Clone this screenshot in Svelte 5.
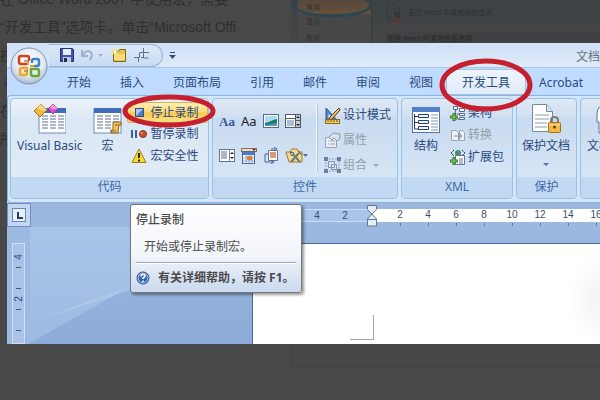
<script>
  const tabs = ['开始', '插入', '页面布局', '引用', '邮件', '审阅', '视图', '开发工具', 'Acrobat'];
  const active = '开发工具';
  const margin = ['8', '6', '4', '2'];
  const marks = ['2', '4', '6', '8', '10', '12', '14', '16'];
  const controls = ['rich', 'plain', 'picture', 'combo', 'list', 'date', 'block', 'legacy'];
  const controlNames = ['格式文本', '纯文本', '图片', '组合框', '下拉列表', '日期选取器', '构建基块', '旧式工具'];
  const article = [
    '在 Office Word 2007 中使用宏，需要',
    '“开发工具”选项卡。单击“Microsoft Offi',
    '按',
    '\u00a0在',
    '在',
    '所'
  ];
</script>

{#snippet sheet()}
  <rect x="1" y="7" width="27" height="24" fill="#fff" stroke="#6f8cbd" />
  <rect x="1" y="6" width="27" height="5" fill="#3f6dbb" />
  <path d="M4 14h6m2 0h6m2 0h6M4 17h6m2 0h6m2 0h6M4 20h6m2 0h6m2 0h6M4 23h6m2 0h6m2 0h6M4 26h6m2 0h6m2 0h6" stroke="#5b6f9c" />
{/snippet}

{#snippet icon(name)}
  {#if name === 'rich'}
    <svg width="18" height="16"><text x="0" y="13" font-size="13" font-weight="bold" font-family="Liberation Serif, serif" fill="#34599c">Aa</text></svg>
  {:else if name === 'plain'}
    <svg width="18" height="16"><text x="0" y="13" font-size="13" font-family="Noto Sans, sans-serif" fill="#222">Aa</text></svg>
  {:else if name === 'picture'}
    <svg width="16" height="16"><rect x=".5" y="1.5" width="15" height="13" fill="#fff" stroke="#5a6b7e" /><rect x="2" y="3" width="12" height="10" fill="#a9ddee" /><path d="M2 10l4-1 4-2 4-1v7H2z" fill="#1f7868" /><path d="M2 12l12-2v3H2z" fill="#4f98c4" /></svg>
  {:else if name === 'combo'}
    <svg width="16" height="16"><rect x=".5" y="1.5" width="15" height="4" fill="#fff" stroke="#4d5a6c" /><rect x=".5" y="5.5" width="10" height="9" fill="#fff" stroke="#4d5a6c" /><path d="M2 8h7M2 10h7M2 12h7" stroke="#5c7cae" /><rect x="10.5" y="1.5" width="5" height="13" fill="#c6cdd5" stroke="#4d5a6c" /><path d="M11 5h4l-2-2zM11 11h4l-2 2z" fill="#222" /><path d="M11 7.5h4" stroke="#4d5a6c" /></svg>
  {:else if name === 'list'}
    <svg width="16" height="16"><rect x=".5" y="2.5" width="15" height="12" fill="#fff" stroke="#64748a" /><path d="M2 5h6M2 7h6M2 9h6M2 11h6" stroke="#5c6f8e" /><path d="M10.5 3v11" stroke="#7b8ba0" /><path d="M11 7h4l-2-2zM11 10h4l-2 2z" fill="#222" /></svg>
  {:else if name === 'date'}
    <svg width="17" height="17"><rect x=".5" y="1.5" width="15" height="3" fill="#f4dfc2" stroke="#8d6a50" /><rect x="1.5" y="4.5" width="12" height="12" fill="#fff" stroke="#4568a3" /><rect x="2" y="5" width="11" height="3" fill="#4c79bf" /><path d="M2 11h11M2 14h11M5 8v8M8 8v8M11 8v8" stroke="#8aa6d2" /><rect x="6" y="9" width="5" height="4" fill="#e57b2d" /><path d="M11 2h4l-2 2z" fill="#6b2f1f" /></svg>
  {:else if name === 'block'}
    <svg width="16" height="17"><path d="M5.5 3.5h9v10h-9z" fill="#fff" stroke="#61779d" /><path d="M7 6h6M7 8h6M7 10h6" stroke="#d57a45" stroke-width="1.5" /><path d="M5 7H2v8h8M12 2H8M11 0l3 2-3 2M8 13l3 2-3 2" fill="none" stroke="#4d6387" /></svg>
  {:else if name === 'legacy'}
    <svg width="23" height="17"><path d="M1 5h4l2-3h5l2 3h3v10H4z" fill="#f4d987" stroke="#a27c2e" /><path d="M6 5l9 10M14 6l-8 9" stroke="#6c7888" stroke-width="2" /><path d="M5 5l4 1-2 3zM13 4l4 4" fill="#eef2f8" stroke="#4d5b70" /><path d="M18 7h5l-2.500 3z" fill="#4e6c98" /></svg>
  {:else if name === 'design'}
    <svg width="17" height="17"><path d="M2 1v12h11z" fill="#5685d1" stroke="#2a529a" /><path d="M4.500 7v4H9z" fill="#e1edfb" /><path d="M15 1l1 2-8 9-3 1 1-3z" fill="#f0c65a" stroke="#4c3b25" /><rect x="1.5" y="12.5" width="14" height="4" fill="#f7cd56" stroke="#8d671d" /><path d="M4 13v2M7 13v2M10 13v2M13 13v2" stroke="#6d4c12" /></svg>
  {:else if name === 'props'}
    <svg width="17" height="16"><path d="M1.500 5.500h11v10h-11zM4 9h1M4 12h1M6 9h5M6 12h5" fill="#e9eef5" stroke="#97a3b4" /><path d="M5 5l4-4 7 1v5l-3 2-3-3-2 2z" fill="#d8dfe9" stroke="#8b98ab" /></svg>
  {:else if name === 'group'}
    <svg width="17" height="16"><path d="M2 2h13v12H2z" fill="none" stroke="#8a9cb8" stroke-dasharray="2 1" /><path d="M4.500 4.500h6v6h-6zM7.500 7.500h5v5h-5z" fill="#dce5f1" stroke="#8194b2" /><path d="M0 0h4v4H0zM13 0h4v4h-4zM0 12h4v4H0zM13 12h4v4h-4z" fill="#6a80a3" /></svg>
  {:else if name === 'stop'}
    <svg width="16" height="16"><rect x="4.5" y="3.500" width="8" height="8" fill="#4f7fc6" stroke="#2c4f8e" /><path d="M5 4h7L5 11z" fill="#a9c7ee" /></svg>
  {:else if name === 'pause'}
    <svg width="16" height="16"><path d="M1 4v8M5 4v8" stroke="#3b5d9a" stroke-width="2" /><circle cx="12" cy="8" r="3.500" fill="#c7502c" stroke="#94321b" /><circle cx="11" cy="7" r="1" fill="#f0a285" /></svg>
  {:else if name === 'warn'}
    <svg width="16" height="16"><path d="M8 1l7 13.500H1z" fill="#f8dc28" stroke="#98801e" stroke-linejoin="round" /><path d="M8 5v5M8 11.500v2" stroke="#222" stroke-width="2" /></svg>
  {:else if name === 'schema'}
    <svg width="16" height="16"><path d="M3.500 1.500h4v3h-4zM9.500 3.500h5v3h-5zM9.500 8.500h5v2h-5zM9.500 12.500h5v2h-5zM5.500 5v9h4M6 9h4" fill="#fff" stroke="#536b91" /><path d="M4 8v8M0 12h8" stroke="#397e28" stroke-width="3" /><path d="M4 9v6M1 12h6" stroke="#87d35c" /></svg>
  {:else if name === 'convert'}
    <svg width="16" height="16"><path d="M1.500 3.500h5l2 2v8h-7zM9.500 3.500h3l2 2v8h-5z" fill="#edf1f6" stroke="#9aa6b6" /><path d="M4 9h7M9 6l3 3-3 3" fill="none" stroke="#8794a8" /></svg>
  {:else if name === 'pack'}
    <svg width="16" height="17"><path d="M5.500 6.500h9v9h-9z" fill="#fff" stroke="#64789b" /><path d="M9 10h4M9 12h4M9 14h4" stroke="#6d7d97" /><path d="M4 1L1 4l3 3M12 1l3 3-3 3" fill="none" stroke="#222" stroke-dasharray="2 1" /><circle cx="8" cy="4" r="3" fill="#4c8c79" /><path d="M4 8v8M0 12h8" stroke="#397e28" stroke-width="3" /><path d="M4 9v6M1 12h6" stroke="#87d35c" /></svg>
  {:else if name === 'vb'}
    <svg width="32" height="32"><g transform="translate(4)">{@render sheet()}</g><path d="M7 2l6 6-7 7-6-6z" fill="#f0b83d" stroke="#a96f16" /><path d="M7 2l6 6-5 1-5-3z" fill="#f8d77e" /><path d="M19 2l5 5-5 5-5-5z" fill="#d957c8" stroke="#9a2e91" /><path d="M19 2l5 5h-6l-2-2z" fill="#f09ee4" /></svg>
  {:else if name === 'macro'}
    <svg width="30" height="32">{@render sheet()}<path d="M20 20h8v3h-2l-1 8h-7v-3h2z" fill="#f2c25a" stroke="#8d651f" /><path d="M22 23h4M17 29h6" stroke="#8d651f" /></svg>
  {:else if name === 'struct'}
    <svg width="30" height="32"><rect x="1.5" y="5.5" width="27" height="25" fill="#fff" stroke="#55749f" /><rect x="1" y="5" width="28" height="5" fill="#4e80cb" /><path d="M20 13h7M20 16h7M20 19h7M20 22h7M20 25h7M20 28h7" stroke="#8295b5" /><path d="M3.500 12v15h4M3.500 14.500h4M3.500 20.500h4" fill="none" stroke="#273f6e" /><path d="M7.500 12.500h10v3h-10zM7.500 18.500h10v3h-10zM7.500 24.500h10v3h-10z" fill="#edf4fb" stroke="#273f6e" /></svg>
  {:else if name === 'protect'}
    <svg width="32" height="32"><path d="M2.500 2.500h14l6 7v20h-20z" fill="#fff" stroke="#7188ab" /><path d="M16.500 2.500v7h6" fill="#d5e2f3" stroke="#7188ab" /><path d="M5 13h14M5 17h14M5 21h12M5 25h12" stroke="#8c9bb1" /><path d="M21 22v-4q0-3 3.500-3t3.500 3v4" fill="none" stroke="#807a70" stroke-width="2" /><rect x="18.5" y="20.5" width="12" height="10" rx="1" fill="#f2b944" stroke="#a96e18" /><path d="M19 23h11" stroke="#fae09a" /><circle cx="24.5" cy="25" r="1.5" fill="#65420c" /></svg>
  {:else if name === 'template'}
    <svg width="32" height="32"><circle cx="18" cy="7" r="5" fill="#f6f8fc" stroke="#5d7196" /><path d="M10 31V15q0-5 8-5t8 5v16z" fill="#d9e5f6" stroke="#5d7196" /><path d="M2 12q0-9 10-10l-3 8v6H7v15H4V20H2z" fill="#fff" stroke="#5d7196" /></svg>
  {/if}
{/snippet}

{#snippet small(name, label, off = false, hot = false, drop = false)}
  <button class="small" class:off class:hot>
    {@render icon(name)}<span>{label}</span>
    {#if drop}<i class="arrow"></i>{/if}
  </button>
{/snippet}

{#snippet large(name, label)}
  <button class="large">{@render icon(name)}<span>{label}</span></button>
{/snippet}

<div class="page">
  <div class="behind" aria-hidden="true">
    <div class="article">
      {#each article as line}<p>{line}</p>{/each}
    </div>
    <div class="options">
      <div class="side">
        <span class="picked">常用</span><span>显示</span><span>校对</span>
        <svg class="ring" width="84" height="26"><ellipse cx="42" cy="12" rx="39" ry="11" fill="none" stroke="#2b464f" stroke-width="3" /></svg>
      </div>
      <div class="pane">
        <div class="lead">
          <svg width="20" height="20"><path d="M2.500 1.500h9l3 3v13h-12zM5 6h2M5 10h2M5 14h2M9 6h3" fill="none" stroke="#383838" /><circle cx="12" cy="12" r="3" fill="#383838" /><path d="M7 19q5-7 10 0z" fill="#59382f" /></svg>
          更改 Word 中最常用的选项。
        </div>
        <div class="band">使用 Word 时采用的首选项</div>
      </div>
    </div>
  </div>

  <main class="viewer">
    <header class="title">
      <div class="quick">
        <button aria-label="保存"><svg width="14" height="14"><path d="M.5.500h12l1 1v12H.5z" fill="#4054b4" stroke="#292f76" /><path d="M3 1h8v6H3z" fill="#e9f0fb" /><path d="M3 9h8v5H3z" fill="#c1cae0" /><path d="M4 10h3v4H4z" fill="#252c5c" /></svg></button>
        <button aria-label="撤消"><svg width="22" height="14"><path d="M1 2v6h6M2 7q2-4 6-4 5 2 1 9" fill="none" stroke="#9eb0cb" stroke-width="2" /><path d="M17 6h5l-2.500 3z" fill="#a2b0c6" /></svg></button>
        <button aria-label="新建"><svg width="17" height="16"><path d="M3.500 4.500h5l1-2h6v12h-12z" fill="#efc347" stroke="#836322" /><path d="M4 7h11v6H4z" fill="#f8dc77" /><path d="M5 0v9M0 5h9M2 2l6 6M8 2L2 8" stroke="#f6e05a" /><circle cx="5" cy="5" r="1.5" fill="#fff" /></svg></button>
        <button aria-label="裁剪"><svg width="16" height="16"><path d="M0 10.500h5.500V5.500H15M4.500 15v-4M9.500 1v10h5M7 10.500h3" fill="none" stroke="#5b7295" /></svg></button>
      </div>
      <button class="more" aria-label="自定义快速访问工具栏"><svg width="7" height="8"><path d="M1 1.500h5" stroke="#31507f" /><path d="M0 4h7L3.500 8z" fill="#31507f" /></svg></button>
      <span class="name">文档</span>
    </header>

    <button class="office" aria-label="Office 按钮">
      <svg width="38" height="38" viewBox="0 0 38 38">
        <defs><radialGradient id="orb" cx=".5" cy=".35" r=".65"><stop offset="0" stop-color="#fff" /><stop offset=".65" stop-color="#e3e9f2" /><stop offset="1" stop-color="#a9b8cf" /></radialGradient></defs>
        <circle cx="19" cy="19" r="18" fill="url(#orb)" stroke="#7e93b3" />
        <g fill="none" stroke-width="2.5">
          <path d="M17 17h-6q-2 0-2-2v-4q0-2 2-2h6q2 0 2 2v3" stroke="#cf4020" />
          <path d="M22 16v-2q0-2 2-2h3q2 0 2 2v3q0 2-2 2h-3" stroke="#3d82c9" />
          <path d="M17 21v5q0 2-2 2h-3q-2 0-2-2v-3q0-2 2-2z" stroke="#eda829" />
          <path d="M21 22v5q0 2 2 2h4q2 0 2-2v-3q0-2-2-2z" stroke="#67a936" />
          <path d="M14 14h4v4M20 19h5M14 24h4" stroke="#df7a28" stroke-width="1.5" />
        </g>
      </svg>
    </button>

    <nav class="tabs">
      {#each tabs as tab}<button class="tab" class:active={tab === active}>{tab}</button>{/each}
    </nav>

    <div class="ribbon">
      <section class="group code">
        <div class="body">
          {@render large('vb', 'Visual Basic')}
          {@render large('macro', '宏')}
          <div class="stack">
            {@render small('stop', '停止录制', false, true)}
            {@render small('pause', '暂停录制')}
            {@render small('warn', '宏安全性')}
          </div>
        </div>
        <h2>代码</h2>
      </section>
      <section class="group ctl">
        <div class="body">
          <div class="grid">
            {#each controls as c, i}<button aria-label={controlNames[i]}>{@render icon(c)}</button>{/each}
          </div>
          <div class="stack wide">
            {@render small('design', '设计模式')}
            {@render small('props', '属性', true)}
            {@render small('group', '组合', true, false, true)}
          </div>
        </div>
        <h2>控件</h2>
      </section>
      <section class="group xml">
        <div class="body">
          {@render large('struct', '结构')}
          <div class="stack">
            {@render small('schema', '架构')}
            {@render small('convert', '转换', true)}
            {@render small('pack', '扩展包')}
          </div>
        </div>
        <h2>XML</h2>
      </section>
      <section class="group protect">
        <div class="body">
          <button class="large">{@render icon('protect')}<span>保护文档</span><i class="arrow"></i></button>
        </div>
        <h2>保护</h2>
      </section>
      <section class="group last">
        <div class="body">{@render large('template', '文档模板')}</div>
        <h2>模板</h2>
      </section>
    </div>

    <div class="rulerbar">
      <button class="stop" aria-label="制表符"><svg width="14" height="14"><rect x=".5" y=".5" width="13" height="13" fill="#e8f0fb" stroke="#6b88b8" /><path d="M6 4v6h5" fill="none" stroke="#2c3c5c" stroke-width="2" /></svg></button>
      <div class="ruler">
        <div class="out">{#each margin as m}<span>{m}</span>{/each}</div>
        <div class="in">{#each marks as m}<span>{m}</span>{/each}</div>
        <svg class="indent" width="10" height="22"><path d="M.5.500h9v4L5 9 .500 4.500zM5 9l4.500 5v7h-9v-7z" fill="#e5eef5" stroke="#64798c" /><path d="M1 14.500h8" stroke="#64798c" /></svg>
      </div>
    </div>

    <div class="work">
      <div class="vruler"><div><span>4</span><b></b><span></span><b></b><span>2</span><b></b><span></span><b></b></div></div>
      <svg class="shine" width="222" height="117"><path d="M0 0h222L110 60 0 96z" fill="#bcd5f2" opacity=".4" /><path d="M0 116L170 20 130 48 0 96z" fill="#c9ddf5" opacity=".3" /></svg>
      <div class="paper"><i></i></div>
    </div>

    <div class="tip" role="tooltip">
      <strong>停止录制</strong>
      <p>开始或停止录制宏。</p>
      <div class="help">
        <svg width="14" height="14"><circle cx="7" cy="7" r="6" fill="#3564b7" stroke="#1f3e7d" /><circle cx="7" cy="7" r="5" fill="none" stroke="#c4d7f2" /><path d="M5 5.500q0-2 2-2t2 1.500q0 1-2 2v1M7 9.500v1.500" fill="none" stroke="#fff" stroke-width="1.5" /></svg>
        有关详细帮助，请按 F1。
      </div>
    </div>

    <svg class="notes" width="593" height="100" fill="none" stroke="#c6202e" stroke-width="5">
      <ellipse cx="162" cy="68" rx="44" ry="14" />
      <ellipse cx="479" cy="42" rx="44" ry="24" />
    </svg>
  </main>
</div>

<style>
  :global(body) { background: #484848; }
  .page, .page * { box-sizing: border-box; }
  .page {
    position: relative;
    min-height: 100vh;
    overflow: hidden;
    background: #484848;
    font: 12px/16px "Noto Sans", "Noto Sans CJK SC", sans-serif;
    color: #2b4a7d;
  }
  svg { display: block; flex: none; }
  p, h2 { margin: 0; font-size: inherit; font-weight: normal; }
  button { margin: 0; padding: 0; border: 0; background: none; font: inherit; color: inherit; white-space: nowrap; }

  .behind { display: flex; height: 368px; }
  .article {
    flex: none;
    width: 290px;
    margin-top: -15px;
    font: 14px/28px "Liberation Sans", "Noto Sans CJK SC", sans-serif;
    color: #2f2f2f;
    white-space: nowrap;
  }
  .article p { height: 28px; }
  .options {
    flex: 1;
    display: flex;
    padding-left: 4px;
    border: solid #434546;
    border-width: 0 0 3px 4px;
    font-size: 7px;
    color: #2f2f2f;
    background: linear-gradient(#3d4245, #444546 40px, #474747 80px);
  }
  .side { position: relative; flex: none; width: 74px; height: 80px; border-right: 1px solid #3a3a3a; background: #474747; }
  .side span { display: block; height: 16px; padding-left: 8px; }
  .side .picked { height: 14px; background: linear-gradient(#57483c, #66503b); }
  .ring { position: absolute; left: -8px; top: -7px; }
  .pane { flex: 1; padding-left: 13px; }
  .lead { display: flex; align-items: center; gap: 3px; height: 26px; }
  .band { margin-top: 5px; padding-left: 2px; background: #3f4143; font-weight: bold; }

  .viewer { position: absolute; left: 7px; right: 0; top: 43px; overflow: hidden; background: #bfdbff; }
  .title {
    display: flex;
    align-items: center;
    height: 25px;
    padding-left: 42px;
    border-bottom: 1px solid #a5c8e6;
    background: linear-gradient(#cfe0f8, #d3e3f7 8px, #e0ebf9);
    white-space: nowrap;
  }
  .quick {
    flex: none;
    display: flex;
    align-items: center;
    gap: 7px;
    width: 114px;
    height: 23px;
    padding-left: 11px;
    border: 1px solid #9bb4d9;
    border-left: 0;
    border-radius: 0 12px 12px 0;
    background: linear-gradient(#dce8f8, #c8dbf3);
  }
  .more { margin-left: 6px; }
  .name { margin-left: auto; line-height: 24px; padding-top: 3px; color: #68717f; }
  .office { position: absolute; left: 3px; top: 4px; }

  .tabs { display: flex; gap: 1px; height: 27px; padding: 1px 0 0 46px; overflow: hidden; }
  .tab { padding: 0 14px; border-radius: 4px 4px 0 0; line-height: 28px; }
  .tab.active { flex: 0 0 80px; margin: 0 -2px; background: linear-gradient(#eef5fe, #dfebf9); box-shadow: inset 0 0 0 1px #a4c4e6; }

  .ribbon {
    display: flex;
    gap: 3px;
    height: 108px;
    padding: 2px 0 3px 2px;
    border: solid #8db2df;
    border-width: 1px 0 1px 1px;
    border-radius: 4px 0 0 4px;
    background: #d3e7fa;
    overflow: hidden;
  }
  .group {
    flex: none;
    display: flex;
    flex-direction: column;
    border: 1px solid #9dbfe2;
    border-radius: 4px;
    overflow: hidden;
    background: linear-gradient(#dfe9f6, #d0dff1 18px, #c9dbf0 20px, #dbe9f8);
  }
  .group h2 { flex: none; height: 21px; line-height: 20px; text-align: center; background: #c1d9f3; color: #4268a5; }
  .body { flex: 1; display: flex; align-items: flex-start; padding-top: 3px; }
  .code { width: 199px; background: linear-gradient(#ecf2fa, #dfe9f5 18px, #dce7f4 20px, #e2edf9); }
  .ctl { width: 186px; }
  .xml { width: 112px; }
  .protect { width: 61px; }
  .last { width: 100px; }

  .large { display: flex; flex-direction: column; align-items: center; gap: 4px; padding: 0 6px; }
  .code .large + .large { padding: 0 4px; }
  .xml .large { padding: 0 7px 0 9px; }
  .protect .large { padding: 0 5px; }
  .arrow { border: solid transparent; border-width: 3px 3px 0; border-top-color: #55719c; }
  .large .arrow { margin-top: 5px; }
  .small .arrow { margin-left: 4px; }
  .stack { display: flex; flex-direction: column; }
  .code .stack { flex: 1; }
  .code .small { gap: 4px; padding-left: 4px; }
  .small { display: flex; align-items: center; gap: 2px; height: 22px; padding: 0 2px; border-radius: 3px; }
  .small.off { color: #939eac; }
  .small.off .arrow { border-top-color: #9da8b6; }
  .small.hot { height: 21px; background: linear-gradient(#fdf0bb, #fbd976 10px, #f8c94d 11px, #fce38d); box-shadow: inset 0 0 0 1px #d9b65c; }
  .stack.wide { gap: 3px; padding: 2px 0 0 5px; }
  .grid {
    display: grid;
    grid-template-columns: repeat(4, 22px);
    grid-auto-rows: 34px;
    width: 104px;
    margin-top: 2px;
    padding-left: 5px;
    border-right: 1px solid #f1f7fd;
    box-shadow: 1px 0 #b1c8e2;
  }
  .grid button { display: flex; align-items: center; padding-left: 1px; overflow: visible; }

  .rulerbar { display: flex; height: 24px; background: #9cb8df; }
  .stop { display: flex; align-items: center; justify-content: center; flex: none; width: 24px; height: 24px; background: #c3d6f2; border: 1px solid #6f8fc6; }
  .ruler { position: relative; flex: 1; display: flex; height: 13px; margin: 6px 0 0 216px; font: 10px/12px "Liberation Sans", sans-serif; color: #3d4d68; }
  .ruler span { flex: none; width: 28px; text-align: center; }
  .out { display: flex; flex: none; border: solid #c9dcf3; border-width: 1px 0; background: #a9c4e8; padding-right: 14px; }
  .in { display: flex; flex: 1; width: 0; padding-left: 13px; background: #fff; }
  .in span::after { content: ""; display: block; width: 1px; height: 3px; margin: 2px auto 0; background: #5d7cab; }
  .indent { position: absolute; left: 120px; top: -4px; }

  .work { display: flex; height: 117px; background: linear-gradient(#9bb8e1, #8cabd8); }
  .vruler { flex: none; width: 23px; padding: 16px 0 0 5px; background: #9dbae2; }
  .vruler div {
    display: flex;
    flex-direction: column;
    align-items: center;
    width: 13px;
    height: 101px;
    padding-top: 7px;
    border: 1px solid #cfe0f4;
    background: #a9c2e6;
    font: 10px/12px "Liberation Sans", sans-serif;
  }
  .vruler span { flex: none; height: 12px; transform: rotate(-90deg); }
  .vruler b { flex: none; width: 5px; height: 1px; margin: 4px 0; background: #42567a; }
  .shine { flex: none; }
  .paper {
    flex: 1;
    margin-top: 16px;
    border: solid #4f688f;
    border-width: 1px 0 0 1px;
    background: radial-gradient(ellipse 32px 45px at 100% 55px, #f3f3f3, #fff);
  }
  .paper i { display: block; width: 24px; height: 25px; margin: 71px 0 0 97px; border: solid #a6a6a6; border-width: 0 1px 1px 0; }

  .tip {
    position: absolute;
    left: 123px;
    top: 161px;
    width: 172px;
    padding: 7px 5px 6px;
    border: 1px solid #767676;
    border-radius: 3px;
    background: linear-gradient(#fff, #f2f5fa 50px, #c9d9ef);
    box-shadow: 2px 2px 3px #0006;
    color: #4c4c4c;
    white-space: nowrap;
  }
  .tip strong { display: block; font-weight: 500; }
  .tip p { padding: 11px 0 7px 8px; }
  .help { display: flex; align-items: center; gap: 8px; padding-top: 7px; border-top: 1px solid #9da9ba; box-shadow: inset 0 1px #fff; font-weight: bold; }
  .notes { position: absolute; left: 0; top: 0; pointer-events: none; }
</style>
